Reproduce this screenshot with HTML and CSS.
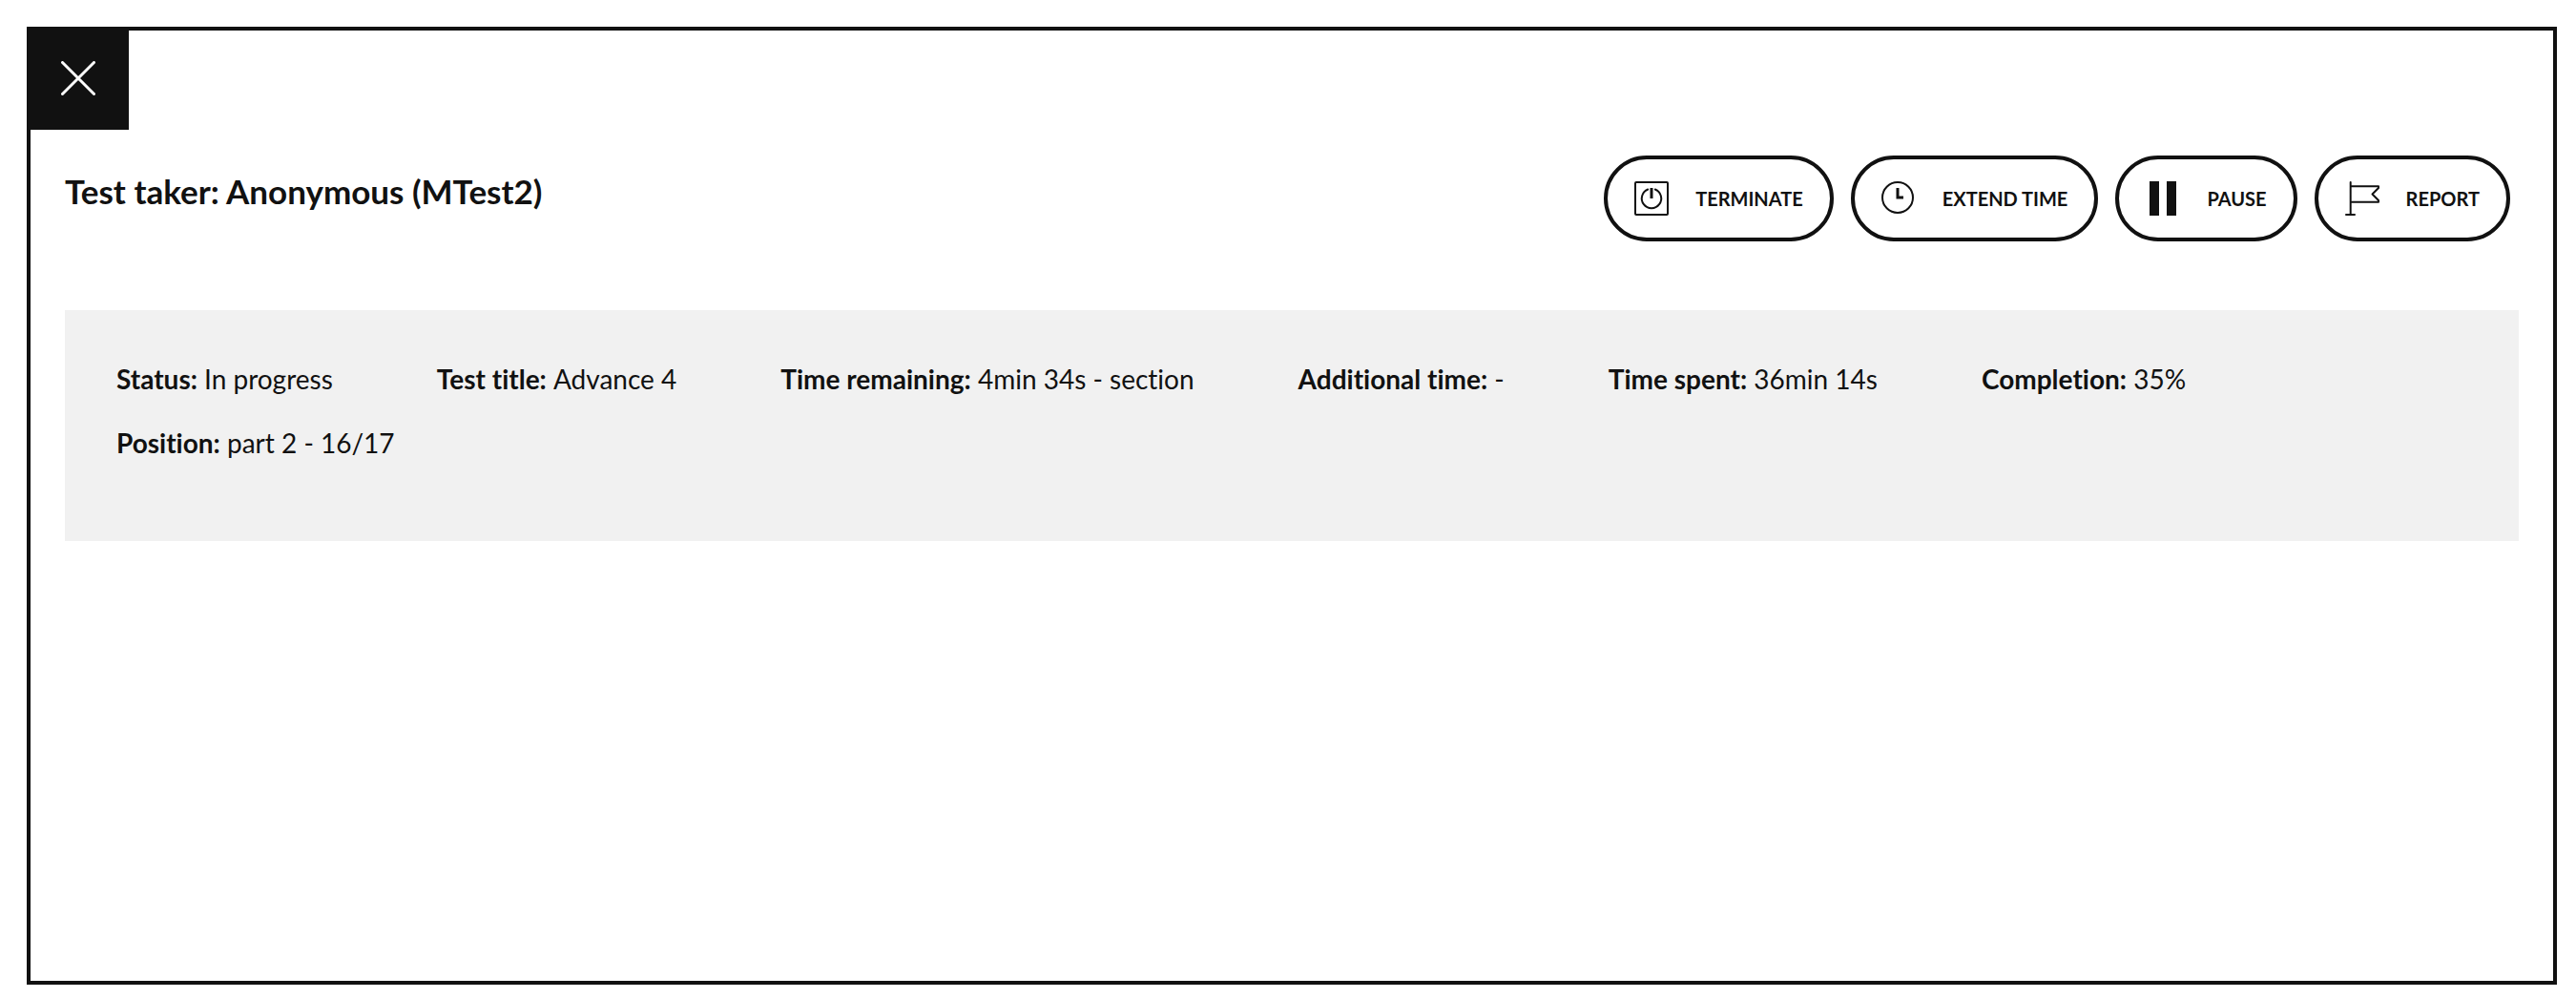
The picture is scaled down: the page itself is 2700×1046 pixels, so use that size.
FILE: index.html
```
<!DOCTYPE html>
<html lang="en">
  <head>
    <meta charset="UTF-8" />
    <meta name="viewport" content="width=device-width, initial-scale=1.0" />
    <title>Test taker: Anonymous (MTest2)</title>
    <link rel="stylesheet" href="styles.css">
  </head>
  <body>
    <main class="dialog">
      <button class="close" type="button" aria-label="Close">
        <svg viewBox="0 0 36 36" aria-hidden="true">
          <path d="M1.5 1.5l33 33M34.5 1.5l-33 33" />
        </svg>
      </button>

      <div class="content">
        <header class="header">
          <h1>Test taker: Anonymous (MTest2)</h1>

          <div class="actions">
            <button class="action" type="button">
              <svg viewBox="0 0 36 36" aria-hidden="true">
                <rect x="1" y="1" width="34" height="34" rx="1" />
                <path d="M14.2 8.500a10.200 10.200 0 1 0 7.600 0" />
                <path class="thick" d="M18 7v11" />
              </svg>
              Terminate
            </button>
            <button class="action" type="button">
              <svg viewBox="0 0 36 36" aria-hidden="true">
                <circle cx="17" cy="17" r="16" />
                <path class="thick" d="M17 7v10h6" />
              </svg>
              Extend time
            </button>
            <button class="action" type="button">
              <svg viewBox="0 0 36 36" aria-hidden="true">
                <path class="solid" d="M4 0h10v36H4zM22 0h10v36H22z" />
              </svg>
              Pause
            </button>
            <button class="action" type="button">
              <svg viewBox="0 0 36 36" aria-hidden="true">
                <path d="M5.700 1v34M1 35h9M5.700 5.300h29.300v1.700l-6.500 6.500 6.500 6.500v1.700H5.700" />
              </svg>
              Report
            </button>
          </div>
        </header>

        <dl class="details">
          <div><dt>Status:</dt> <dd>In progress</dd></div>
          <div><dt>Test title:</dt> <dd>Advance 4</dd></div>
          <div><dt>Time remaining:</dt> <dd>4min 34s - section</dd></div>
          <div><dt>Additional time:</dt> <dd>-</dd></div>
          <div><dt>Time spent:</dt> <dd>36min 14s</dd></div>
          <div><dt>Completion:</dt> <dd>35%</dd></div>
          <div><dt>Position:</dt> <dd>part 2 - 16/17</dd></div>
        </dl>
      </div>
    </main>
  </body>
</html>
```
FILE: styles.css
```
* {
  box-sizing: border-box;
}

body {
  margin: 0;
  padding: 28px 20px 14px 28px;
  min-height: 100vh;
  display: flex;
  background: #fff;
  color: #111;
  font-family: Lato, "Liberation Sans", sans-serif;
  font-size: 28px;
  line-height: 36px;
  font-variant-ligatures: none;
}

.dialog {
  flex: 1;
  border: 4px solid #111;
}

.close {
  display: flex;
  align-items: center;
  justify-content: center;
  width: 103px;
  height: 104px;
  padding: 0 4px 4px 0;
  border: none;
  background: #111;
  cursor: pointer;
}

.close svg {
  width: 36px;
  height: 36px;
  fill: none;
  stroke: #fff;
  stroke-width: 3;
  stroke-linecap: round;
}

.content {
  padding: 27px 36px 36px;
}

.header {
  display: flex;
  justify-content: space-between;
  gap: 36px;
  padding-right: 9px;
  margin-bottom: 72px;
}

h1 {
  margin: 16px 0 0;
  font-size: 35px;
  line-height: 42px;
  font-weight: 700;
}

.actions {
  display: flex;
  flex-wrap: wrap;
  gap: 18px;
}

.action {
  display: flex;
  align-items: center;
  gap: 28px;
  height: 90px;
  padding: 0 28px;
  border: 4px solid #111;
  border-radius: 45px;
  background: #fff;
  color: #111;
  font-family: inherit;
  font-size: 20px;
  font-weight: 700;
  text-transform: uppercase;
  cursor: pointer;
}

.action svg {
  width: 36px;
  height: 36px;
  fill: none;
  stroke: #111;
  stroke-width: 2;
  stroke-linecap: round;
  stroke-linejoin: round;
}

.action .thick {
  stroke-width: 3;
  stroke-linecap: butt;
  stroke-linejoin: miter;
}

.action .solid {
  fill: #111;
  stroke: none;
}

.details {
  display: flex;
  flex-wrap: wrap;
  gap: 31px 109px;
  margin: 0;
  padding: 54px 54px 85px;
  background: #f1f1f1;
}

.details dt,
.details dd {
  display: inline;
  margin: 0;
}

.details dt {
  font-weight: 700;
}
```
